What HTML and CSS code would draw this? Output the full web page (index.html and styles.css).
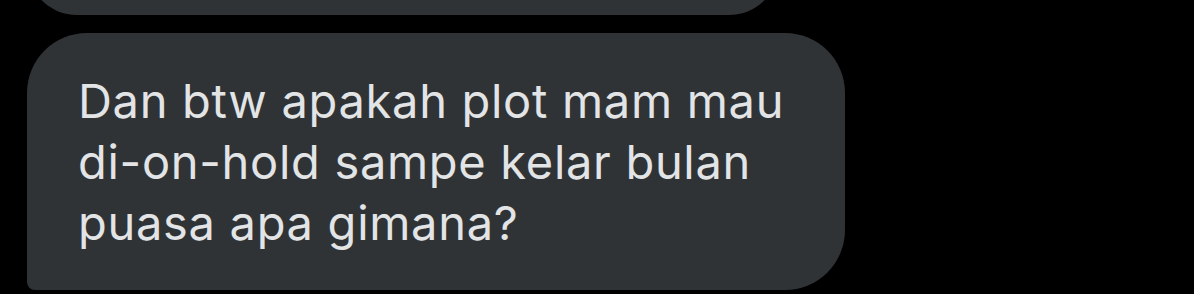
FILE: index.html
```html
<!DOCTYPE html>
<html lang="id">
<head>
    <meta charset="UTF-8">
    <meta name="viewport" content="width=device-width, initial-scale=1.0">
    <title>Pesan</title>
    <link rel="stylesheet" href="styles.css">
</head>
<body>

<div class="thread">
    <div class="bubble received previous"></div>
    <div class="bubble received last">
        <p class="text">Dan btw apakah plot mam mau di-on-hold sampe kelar bulan puasa apa gimana?</p>
    </div>
</div>

</body>
</html>
```

FILE: styles.css
```css
body {
    margin: 0;
    background: #000;
    font-family: Inter, "Liberation Sans", Arial, sans-serif;
    overflow: hidden;
    height: 294px;
}
.thread {
    display: flex;
    flex-direction: column;
    align-items: flex-start;
    gap: 18px;
    padding-left: 27px;
}
.bubble {
    background: #2f3336;
    color: #e2e4e5;
    border-radius: 60px;
    box-sizing: border-box;
}
.bubble.previous {
    width: 752px;
    height: 100px;
    margin-top: -85px;
}
.bubble.last {
    width: 818px;
    height: 257px;
    padding: 37px 30px 37px 51px;
    border-bottom-left-radius: 8px;
}
.text {
    margin: 0;
    font-size: 47px;
    line-height: 61px;
    letter-spacing: 0.7px;
}
```
